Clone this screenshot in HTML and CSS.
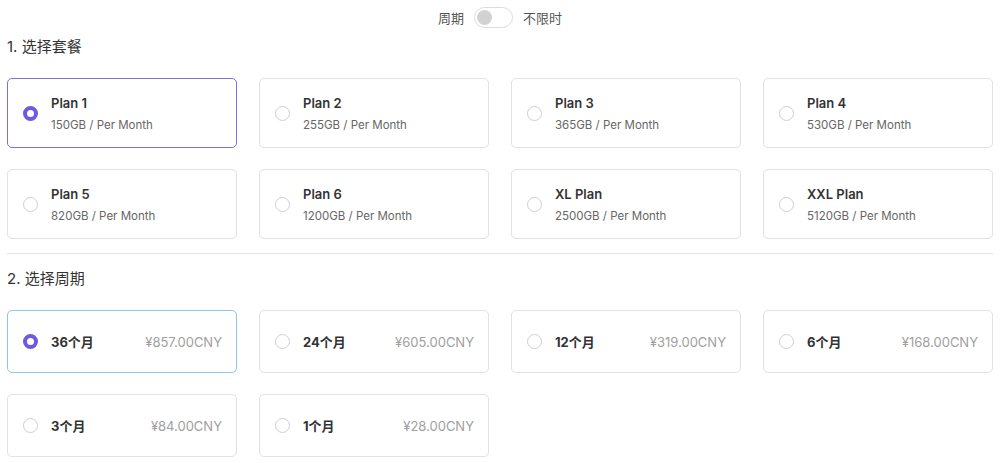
FILE: index.html
```html
<!DOCTYPE html>
<html lang="zh-CN">
<head>
    <meta charset="UTF-8">
    <title>选择套餐</title>
    <link rel="stylesheet" href="styles.css">
</head>
<body>
    <div class="page">
        <div class="mode-switch">
            <span>周期</span>
            <div class="switch"><div class="knob"></div></div>
            <span>不限时</span>
        </div>

        <h2 class="step-title">1. 选择套餐</h2>
        <div class="plan-grid">
            <div class="plan-card active">
                <div class="radio"></div>
                <div class="plan-info">
                    <div class="plan-name">Plan 1</div>
                    <div class="plan-desc">150GB / Per Month</div>
                </div>
            </div>
            <div class="plan-card">
                <div class="radio"></div>
                <div class="plan-info">
                    <div class="plan-name">Plan 2</div>
                    <div class="plan-desc">255GB / Per Month</div>
                </div>
            </div>
            <div class="plan-card">
                <div class="radio"></div>
                <div class="plan-info">
                    <div class="plan-name">Plan 3</div>
                    <div class="plan-desc">365GB / Per Month</div>
                </div>
            </div>
            <div class="plan-card">
                <div class="radio"></div>
                <div class="plan-info">
                    <div class="plan-name">Plan 4</div>
                    <div class="plan-desc">530GB / Per Month</div>
                </div>
            </div>
            <div class="plan-card">
                <div class="radio"></div>
                <div class="plan-info">
                    <div class="plan-name">Plan 5</div>
                    <div class="plan-desc">820GB / Per Month</div>
                </div>
            </div>
            <div class="plan-card">
                <div class="radio"></div>
                <div class="plan-info">
                    <div class="plan-name">Plan 6</div>
                    <div class="plan-desc">1200GB / Per Month</div>
                </div>
            </div>
            <div class="plan-card">
                <div class="radio"></div>
                <div class="plan-info">
                    <div class="plan-name">XL Plan</div>
                    <div class="plan-desc">2500GB / Per Month</div>
                </div>
            </div>
            <div class="plan-card">
                <div class="radio"></div>
                <div class="plan-info">
                    <div class="plan-name">XXL Plan</div>
                    <div class="plan-desc">5120GB / Per Month</div>
                </div>
            </div>
        </div>

        <div class="divider"></div>

        <h2 class="step-title">2. 选择周期</h2>
        <div class="period-grid">
            <div class="period-card active">
                <div class="radio"></div>
                <div class="period-name">36个月</div>
                <div class="period-price">¥857.00CNY</div>
            </div>
            <div class="period-card">
                <div class="radio"></div>
                <div class="period-name">24个月</div>
                <div class="period-price">¥605.00CNY</div>
            </div>
            <div class="period-card">
                <div class="radio"></div>
                <div class="period-name">12个月</div>
                <div class="period-price">¥319.00CNY</div>
            </div>
            <div class="period-card">
                <div class="radio"></div>
                <div class="period-name">6个月</div>
                <div class="period-price">¥168.00CNY</div>
            </div>
            <div class="period-card">
                <div class="radio"></div>
                <div class="period-name">3个月</div>
                <div class="period-price">¥84.00CNY</div>
            </div>
            <div class="period-card">
                <div class="radio"></div>
                <div class="period-name">1个月</div>
                <div class="period-price">¥28.00CNY</div>
            </div>
        </div>
    </div>
</body>
</html>
```

FILE: styles.css
```css
* {
    margin: 0;
    padding: 0;
    box-sizing: border-box;
}

body {
    font-family: Inter, "Noto Sans CJK SC", sans-serif;
    background: #fff;
    color: #333;
}

.page {
    padding: 7px 7px 0 7px;
}

.mode-switch {
    display: flex;
    align-items: center;
    justify-content: center;
    gap: 10px;
    height: 20px;
    font-size: 13px;
    color: #555;
}

.switch {
    width: 39px;
    height: 21px;
    border: 1px solid #dcdcdc;
    border-radius: 11px;
    background: #fff;
    display: flex;
    align-items: center;
    padding-left: 2px;
}

.knob {
    width: 15px;
    height: 15px;
    border-radius: 50%;
    background: #d2d2d2;
}

.step-title {
    font-size: 15px;
    font-weight: 400;
    color: #333;
    line-height: 20px;
    margin-top: 10px;
    margin-bottom: 21px;
}

.plan-grid,
.period-grid {
    display: grid;
    grid-template-columns: repeat(4, 1fr);
    gap: 21px 22px;
}

.plan-card,
.period-card {
    border: 1px solid #e2e2e2;
    border-radius: 5px;
    display: flex;
    align-items: center;
    padding: 0 14px 0 15px;
}

.plan-card {
    height: 70px;
}

.period-card {
    height: 63px;
}

.plan-card.active {
    border-color: #7d72d8;
}

.period-card.active {
    border-color: #8ec6ea;
}

.radio {
    width: 15px;
    height: 15px;
    border-radius: 50%;
    border: 1px solid #cfcfcf;
    flex-shrink: 0;
    margin-right: 13px;
}

.active .radio {
    border: 4px solid #6a5be2;
}

.plan-name {
    font-size: 13px;
    font-weight: 600;
    color: #333;
    line-height: 18px;
}

.plan-desc {
    font-size: 11.5px;
    color: #666;
    line-height: 16px;
    margin-top: 5px;
}

.period-name {
    font-size: 13px;
    font-weight: 700;
    color: #333;
    flex: 1;
}

.period-price {
    font-size: 13px;
    color: #a0a0a0;
}

.divider {
    height: 1px;
    background: #e4e4e4;
    margin-top: 14px;
    margin-bottom: 15px;
}
```
